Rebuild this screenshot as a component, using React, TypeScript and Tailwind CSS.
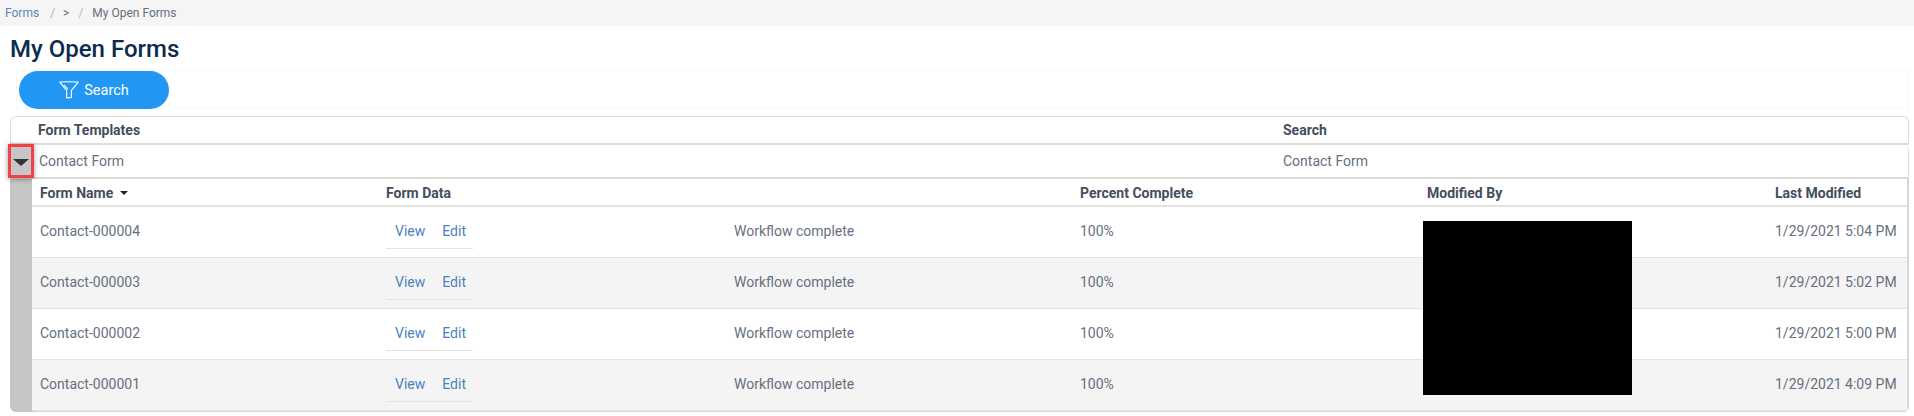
const rows = [
  { name: "Contact-000004", modified: "1/29/2021 5:04 PM" },
  { name: "Contact-000003", modified: "1/29/2021 5:02 PM" },
  { name: "Contact-000002", modified: "1/29/2021 5:00 PM" },
  { name: "Contact-000001", modified: "1/29/2021 4:09 PM" },
];

function FunnelIcon() {
  return (
    <svg width="20" height="18" viewBox="0 0 20 18" fill="none" stroke="white" strokeWidth="1.2" strokeLinejoin="round" strokeLinecap="round">
      <path d="M0.8 1.2C4 0.6 16 0.6 19.2 1.2L12.4 9.4V16.4L7.6 17V9.4Z" />
      <path d="M5.2 4.4L8.6 7.6" />
    </svg>
  );
}

export default function App() {
  return (
    <div className="h-[416px] overflow-hidden bg-white font-['Roboto',sans-serif] text-sm text-[#66707e]">
      {/* Breadcrumb */}
      <div className="flex h-[26px] items-center bg-[#f5f5f5] pl-[5px] text-xs text-[#666f7b]">
        <a className="text-[#5a86b8]">Forms</a>
        <span className="ml-[11px] text-[#b5b5b5]">/</span>
        <span className="ml-[8px]">&gt;</span>
        <span className="ml-[9px] text-[#b5b5b5]">/</span>
        <span className="ml-[9px]">My Open Forms</span>
      </div>

      <h1 className="mt-[5px] mb-[3px] ml-[10px] h-[36px] text-2xl leading-[36px] font-medium text-[#0d2b4e]">My Open Forms</h1>

      {/* Search panel */}
      <div className="mr-[5px] ml-[16px] h-[39px] border border-[#f7f7f7] pl-[2px]">
        <button className="flex h-[38px] w-[150px] items-center justify-center gap-[5px] rounded-[19px] bg-[#2196f3] text-[14.5px] text-white">
          <FunnelIcon />
          <span className="mt-[2px]">Search</span>
        </button>
      </div>

      <div className="mt-[7px] mr-[5px] ml-[10px]">
        {/* Template header */}
        <div className="flex h-[29px] items-center rounded-t-md border border-b-2 border-[#dcdcdc] pl-[27px] font-bold text-[#434e5e]">
          <div className="w-[1245px]">Form Templates</div>
          <div>Search</div>
        </div>

        {/* Expanded template row */}
        <div className="relative flex h-[34px] items-center rounded-tr-md border-r border-b-2 border-[#dcdcdc] pl-[29px]">
          <div className="absolute top-[-1px] left-[-2px] flex h-[34px] w-[26px] items-center justify-center border-[3px] border-[#f04048] bg-[#c6c6c6] shadow-[0_1px_5px_rgba(0,0,0,0.4)]">
            <div className="mt-[3px] h-0 w-0 border-x-[8px] border-t-[7px] border-x-transparent border-t-[#333333]" />
          </div>
          <div className="w-[1244px]">Contact Form</div>
          <div>Contact Form</div>
        </div>

        {/* Child table beside the grey gutter */}
        <div className="flex h-[233px] overflow-hidden rounded-b-md bg-[#c6c6c6]">
          <div className="w-[22px] shrink-0" />
          <div className="relative min-w-0 flex-1 rounded-b-sm border-r-2 border-b-2 border-[#d8d8d8] bg-white">
            <div className="grid h-[28px] grid-cols-[346px_348px_346px_347px_348px_1fr] items-center border-b-2 border-[#e2e2e2] pt-[2px] pl-[8px] font-bold text-[#434e5e]">
              <div className="flex items-center gap-[7px]">
                Form Name
                <div className="h-0 w-0 border-x-[4px] border-t-[4px] border-x-transparent border-t-[#222222]" />
              </div>
              <div>Form Data</div>
              <div />
              <div>Percent Complete</div>
              <div>Modified By</div>
              <div>Last Modified</div>
            </div>

            {rows.map((row, i) => (
              <div
                key={row.name}
                className={
                  i % 2 === 1
                    ? "grid h-[51px] grid-cols-[346px_348px_346px_347px_348px_1fr] items-center border-b border-[#e2e2e2] bg-[#f4f4f4] pb-[2px] pl-[8px] last:border-b-0"
                    : "grid h-[51px] grid-cols-[346px_348px_346px_347px_348px_1fr] items-center border-b border-[#e2e2e2] pb-[2px] pl-[8px]"
                }
              >
                <div>{row.name}</div>
                <div className="h-full pt-[6px]">
                  <div className="flex h-[36px] w-[87px] items-center gap-[17px] border-b border-[#e4e4e4] pl-[9px] text-[#4a82bf]">
                    <a>View</a>
                    <a>Edit</a>
                  </div>
                </div>
                <div>Workflow complete</div>
                <div>100%</div>
                <div />
                <div>{row.modified}</div>
              </div>
            ))}

            {/* Redacted names */}
            <div className="absolute top-[42px] left-[1391px] h-[174px] w-[209px] bg-black" />
          </div>
        </div>
      </div>
    </div>
  );
}
